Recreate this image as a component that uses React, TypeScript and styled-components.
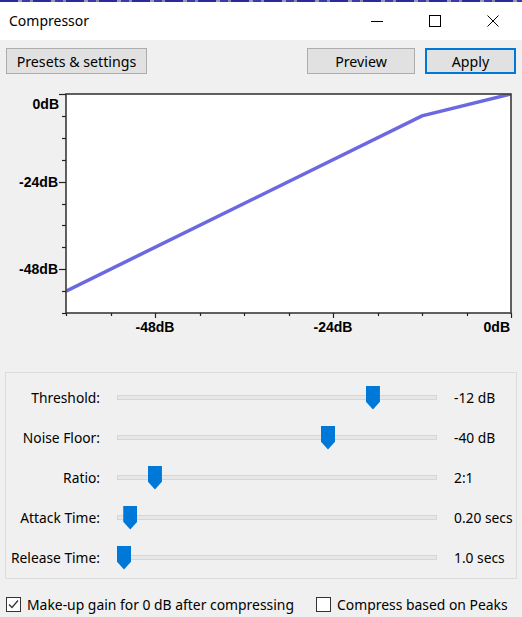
import React from "react";
import styled, { createGlobalStyle } from "styled-components";

const GlobalStyle = createGlobalStyle`
  html, body { margin: 0; padding: 0; background: #f0f0f0; }
  body { font-family: "Noto Sans", "Liberation Sans", sans-serif; color: #000; }
  * { box-sizing: border-box; }
`;

const Window = styled.div`
  width: 522px;
  height: 617px;
  overflow: hidden;
  display: flex;
  flex-direction: column;
  background: #f0f0f0;
`;

const TopStrip = styled.div`
  height: 2px;
  background: repeating-linear-gradient(
    90deg,
    #2a2aa0 0px, #2a2aa0 18px,
    #9a9ab8 18px, #9a9ab8 22px,
    #3a3ab0 22px, #3a3ab0 30px,
    #8888aa 30px, #8888aa 33px
  );
`;

const TitleBar = styled.div`
  height: 38px;
  background: #fff;
  display: flex;
  align-items: center;
  padding-left: 9px;
`;

const Title = styled.div`
  flex: 1;
  font-size: 14px;
  line-height: 1;
  margin-top: -1px;
`;

const CaptionButton = styled.div`
  width: 58px;
  height: 38px;
  display: flex;
  align-items: center;
  justify-content: center;
`;

const Toolbar = styled.div`
  display: flex;
  align-items: center;
  gap: 10px;
  padding: 0 6px 0 6px;
  margin-top: 8px;
  height: 26px;
`;

const Button = styled.div<{ $width: number; $default?: boolean }>`
  width: ${(p) => p.$width}px;
  height: 26px;
  background: #e1e1e1;
  border: ${(p) => (p.$default ? "2px solid #0078d7" : "1px solid #adadad")};
  display: flex;
  align-items: center;
  justify-content: center;
  font-size: 14.2px;
  line-height: 1;
  padding-top: 2px;
`;

const Spacer = styled.div`
  flex: 1;
`;

const Graph = styled.svg`
  display: block;
  width: 522px;
  height: 270px;
  margin-top: 6px;
  font-family: "Liberation Sans", Arial, sans-serif;
`;

const SliderGroup = styled.div`
  margin: 22px 0 0 5px;
  width: 512px;
  border: 1px solid #dcdcdc;
  padding: 4px 0 1px 0;
`;

const Row = styled.div`
  display: grid;
  grid-template-columns: 94px 320px auto;
  column-gap: 17px;
  align-items: center;
  height: 40px;
`;

const Label = styled.div`
  text-align: right;
  font-size: 13.8px;
  white-space: nowrap;
`;

const Value = styled.div`
  font-size: 13.8px;
  white-space: nowrap;
`;

const Track = styled.div`
  position: relative;
  height: 5px;
  background: #e7e7e7;
  border: 1px solid #d6d6d6;
`;

const Thumb = styled.div`
  position: absolute;
  top: -10px;
  width: 14px;
  height: 24px;
  background: #0078d7;
  clip-path: polygon(0 0, 100% 0, 100% 68%, 50% 100%, 0 68%);
`;

const CheckRow = styled.div`
  display: flex;
  align-items: center;
  height: 20px;
  margin-top: 15px;
  padding-left: 6px;
`;

const CheckItem = styled.label<{ $width: number }>`
  display: flex;
  align-items: center;
  gap: 6px;
  width: ${(p) => p.$width}px;
  font-size: 13.9px;
  white-space: nowrap;
`;

const Box = styled.div`
  width: 15px;
  height: 15px;
  border: 1px solid #333;
  background: #fff;
  display: flex;
  align-items: center;
  justify-content: center;
`;

type SliderDef = {
  label: string;
  value: string;
  v: number;
  min: number;
  max: number;
};

const sliders: SliderDef[] = [
  { label: "Threshold:", value: "-12 dB", v: -12, min: -60, max: -1 },
  { label: "Noise Floor:", value: "-40 dB", v: -40, min: -80, max: -20 },
  { label: "Ratio:", value: "2:1", v: 2, min: 1.1, max: 10 },
  { label: "Attack Time:", value: "0.20 secs", v: 0.2, min: 0.1, max: 5 },
  { label: "Release Time:", value: "1.0 secs", v: 1, min: 1, max: 30 },
];

const TRACK_W = 320;
const THUMB_W = 14;

// Graph geometry (svg coordinates; svg top is at page y=80)
const PX0 = 66;
const PX1 = 511;
const PY0 = 14;
const PY1 = 233;
const xOf = (db: number) => PX0 + ((db + 60) * (PX1 - PX0)) / 60;
const yOf = (db: number) => PY0 + (-db * (PY1 - PY0)) / 60;
const outOf = (db: number) => (db <= -12 ? db + 6 : -6 + (db + 12) / 2);

function CompressorGraph() {
  const ticks = Array.from({ length: 11 }, (_, i) => -60 + i * 6);
  const pts = [-60, -12, 0].map((d) => `${xOf(d)},${yOf(outOf(d))}`).join(" ");
  return (
    <Graph viewBox="0 0 522 270">
      <defs>
        <clipPath id="plotclip">
          <rect x={PX0} y={PY0} width={PX1 - PX0} height={PY1 - PY0} />
        </clipPath>
      </defs>
      <rect x={PX0} y={PY0} width={PX1 - PX0} height={PY1 - PY0} fill="#fff" />
      <polyline
        points={pts}
        fill="none"
        stroke="#6c68e2"
        strokeWidth={3.5}
        clipPath="url(#plotclip)"
      />
      <rect
        x={PX0}
        y={PY0}
        width={PX1 - PX0}
        height={PY1 - PY0}
        fill="none"
        stroke="#3a3a3a"
        strokeWidth={1.6}
      />
      {ticks.map((d) => {
        const major = d % 24 === 0;
        const y = Math.round(yOf(d)) + 0.5;
        return (
          <line key={"y" + d} x1={major ? 59 : 62} x2={PX0} y1={y} y2={y} stroke="#222" strokeWidth={1.2} />
        );
      })}
      {ticks.map((d) => {
        const major = d % 24 === 0;
        const x = Math.round(xOf(d)) + 0.5;
        return (
          <line key={"x" + d} x1={x} x2={x} y1={PY1} y2={PY1 + (major ? 5 : 3)} stroke="#222" strokeWidth={1.2} />
        );
      })}
      <g fontSize="14" fontWeight="bold" fill="#000">
        <text x={59} y={24} textAnchor="end" dominantBaseline="central">0dB</text>
        <text x={58} y={yOf(-24)} textAnchor="end" dominantBaseline="central">-24dB</text>
        <text x={58} y={yOf(-48)} textAnchor="end" dominantBaseline="central">-48dB</text>
        <text x={xOf(-48)} y={247} textAnchor="middle" dominantBaseline="central">-48dB</text>
        <text x={xOf(-24)} y={247} textAnchor="middle" dominantBaseline="central">-24dB</text>
        <text x={510} y={247} textAnchor="end" dominantBaseline="central">0dB</text>
      </g>
    </Graph>
  );
}

export default function App() {
  return (
    <>
      <GlobalStyle />
      <Window>
        <TopStrip />
        <TitleBar>
          <Title>Compressor</Title>
          <CaptionButton>
            <svg width="14" height="14" viewBox="0 0 14 14">
              <line x1="1" y1="7.5" x2="13" y2="7.5" stroke="#000" strokeWidth="1" />
            </svg>
          </CaptionButton>
          <CaptionButton>
            <svg width="14" height="14" viewBox="0 0 14 14">
              <rect x="1.5" y="1.5" width="11" height="11" fill="none" stroke="#000" strokeWidth="1" />
            </svg>
          </CaptionButton>
          <CaptionButton>
            <svg width="14" height="14" viewBox="0 0 14 14">
              <path d="M1.5 1.5 L12.5 12.5 M12.5 1.5 L1.5 12.5" stroke="#000" strokeWidth="1" />
            </svg>
          </CaptionButton>
        </TitleBar>
        <Toolbar>
          <Button $width={141}>Presets &amp; settings</Button>
          <Spacer />
          <Button $width={108}>Preview</Button>
          <Button $width={91} $default>Apply</Button>
        </Toolbar>
        <CompressorGraph />
        <SliderGroup>
          {sliders.map((s) => {
            const frac = (s.v - s.min) / (s.max - s.min);
            return (
              <Row key={s.label}>
                <Label>{s.label}</Label>
                <Track>
                  <Thumb style={{ left: `${frac * (TRACK_W - THUMB_W) - 1}px` }} />
                </Track>
                <Value>{s.value}</Value>
              </Row>
            );
          })}
        </SliderGroup>
        <CheckRow>
          <CheckItem $width={310}>
            <Box>
              <svg width="13" height="13" viewBox="0 0 13 13">
                <path d="M2 6.5 L5 9.5 L11 2.5" fill="none" stroke="#333" strokeWidth="1.3" />
              </svg>
            </Box>
            Make-up gain for 0 dB after compressing
          </CheckItem>
          <CheckItem $width={200}>
            <Box />
            Compress based on Peaks
          </CheckItem>
        </CheckRow>
      </Window>
    </>
  );
}
